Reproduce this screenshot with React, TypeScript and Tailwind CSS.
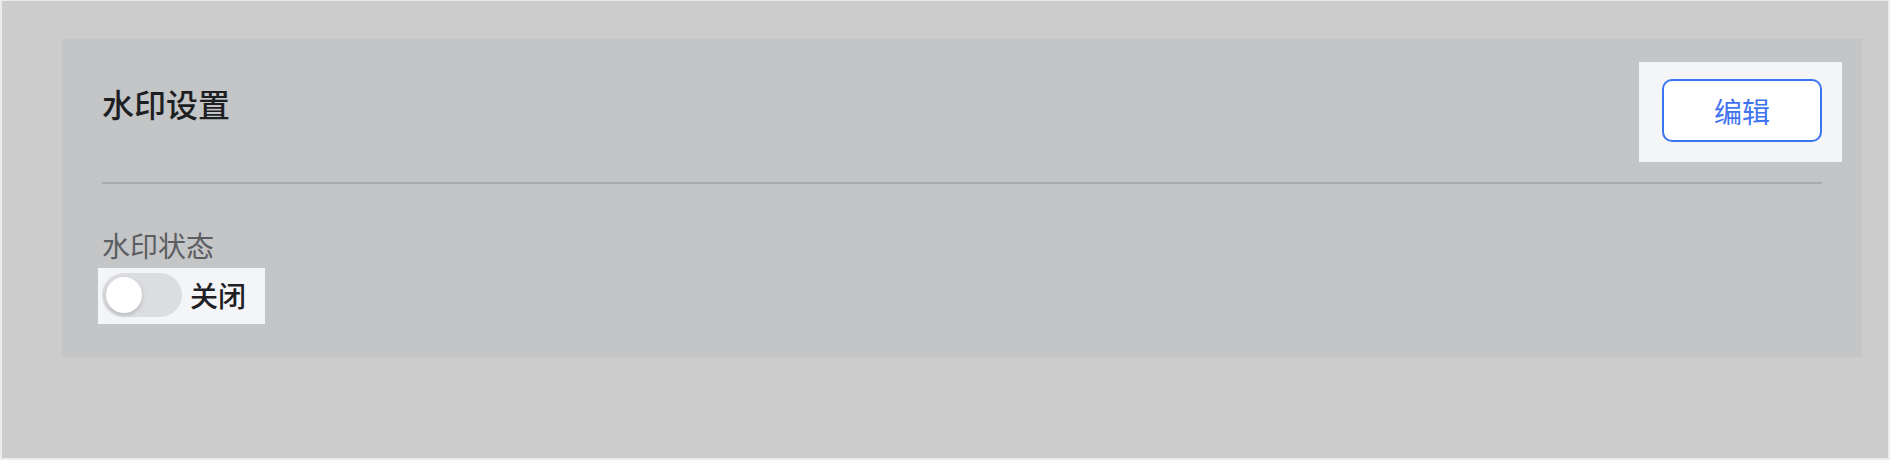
import React from "react";

const font = { fontFamily: '"Noto Sans CJK SC", "Noto Sans", sans-serif' };

export default function App() {
  return (
    <div className="w-[1890px] h-[460px] bg-[#ececec] pt-px pl-[2px] pr-[2px] pb-[2px]" style={font}>
      <div className="h-full bg-[#cccccc] pt-[38px] pl-[60px] pr-[26px]">
        <div className="bg-[#c4c5c7] pt-[40px] px-[40px] pb-[40px]">
          <div className="flex items-start justify-between">
            <h1 className="text-[32px] leading-[48px] font-medium text-[#1e1f23]">水印设置</h1>
            <div className="bg-[#f4f5f7] pl-[23px] pr-[20px] pt-[17px] pb-[20px] -ml-[23px] -mr-[20px] -mt-[17px] -mb-[20px]">
              <button className="w-[160px] h-[63px] rounded-[10px] border-2 border-[#3b74f2] bg-white text-[28px] leading-none text-[#3f74f0]">
                编辑
              </button>
            </div>
          </div>
          <div className="mt-[40px] h-[2px] bg-[#aaabad]" />
          <div className="mt-[41px] text-[28px] leading-[40px] text-[#5c5d61]">水印状态</div>
          <div className="mt-[8px] flex">
            <div className="flex items-center bg-[#f4f5f7] pl-[4px] pr-[19px] pt-[5px] pb-[7px] -ml-[4px] -mt-[5px] -mb-[7px]">
              <div className="w-[80px] h-[44px] rounded-full bg-[#dcdde0] p-[4px] flex items-center">
                <div className="w-[36px] h-[36px] rounded-full bg-white shadow-[0_2px_4px_rgba(0,0,0,0.18)]" />
              </div>
              <span className="ml-[8px] text-[28px] leading-[44px] font-medium text-[#1f2024]">关闭</span>
            </div>
          </div>
        </div>
      </div>
    </div>
  );
}
